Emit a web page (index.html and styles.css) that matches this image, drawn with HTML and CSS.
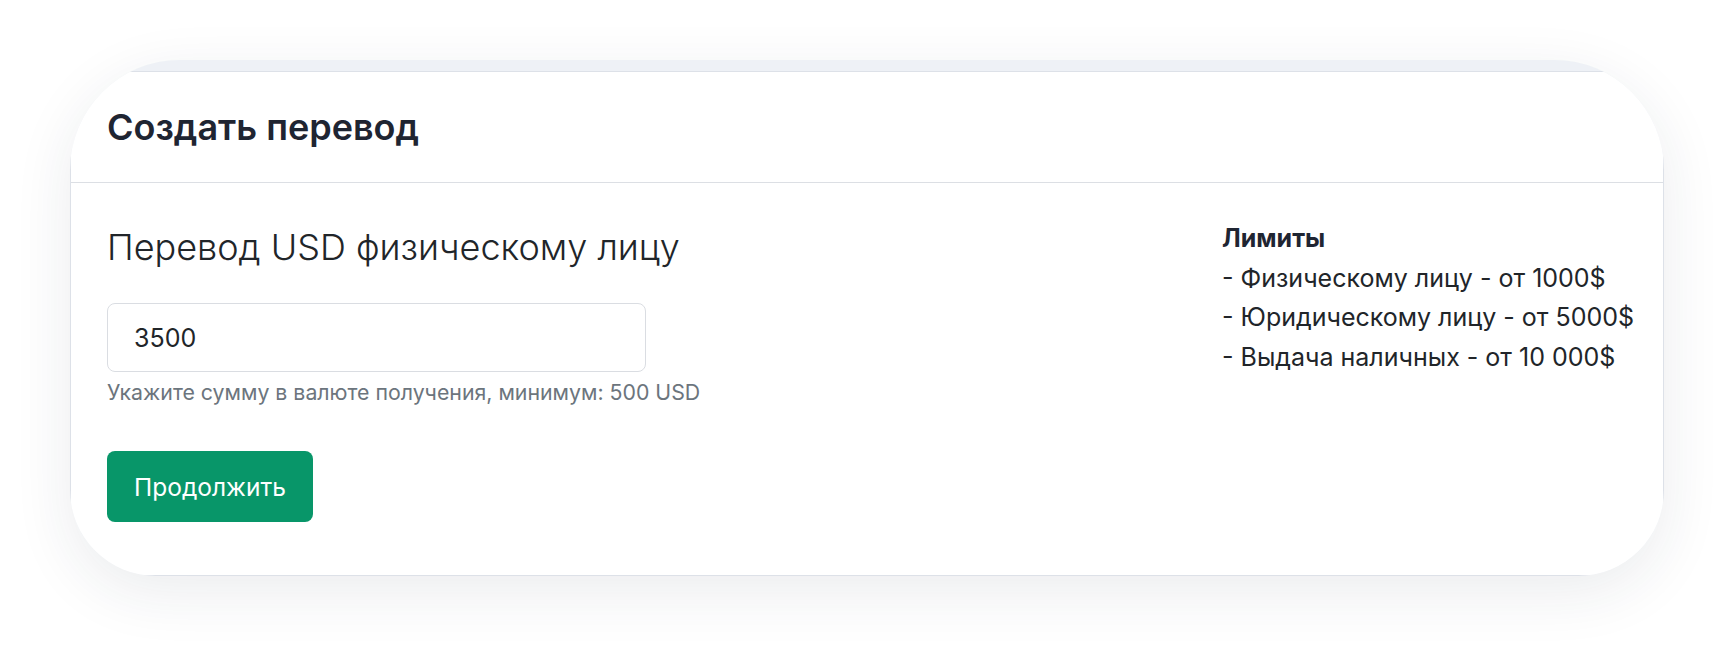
FILE: index.html
```html
<!DOCTYPE html>
<html lang="ru">
<head>
  <meta charset="UTF-8" />
  <meta name="viewport" content="width=device-width, initial-scale=1.0" />
  <title>Создать перевод</title>
  <link rel="stylesheet" href="styles.css">
</head>
<body>
  <div class="page">
    <div class="frame">
      <div class="card">
        <div class="card-header">
          <h4>Создать перевод</h4>
        </div>
        <div class="card-body">
          <div class="form-col">
            <h3 class="subtitle">Перевод USD физическому лицу</h3>
            <input class="amount" type="text" value="3500" />
            <div class="hint">Укажите сумму в валюте получения, минимум: 500 USD</div>
            <button class="btn-next">Продолжить</button>
          </div>
          <div class="limits">
            <b>Лимиты</b><br>
            - Физическому лицу - от 1000$<br>
            - Юридическому лицу - от 5000$<br>
            - Выдача наличных - от 10 000$
          </div>
        </div>
      </div>
    </div>
  </div>
</body>
</html>
```

FILE: styles.css
```css
body {
  margin: 0;
  background: #fff;
  font-family: Inter, "Noto Sans", sans-serif;
  color: #212529;
}
.page {
  padding: 60px 64px 76px 70px;
}
.frame {
  background: #eef1f6;
  padding-top: 11px;
  border-radius: 110px 110px 86px 86px;
  overflow: hidden;
  box-shadow: 0 16px 60px rgba(30, 40, 70, 0.09);
}
.card {
  background: #fff;
  border: 1px solid #dde1e8;
}
.card-header {
  height: 110px;
  padding: 0 36px;
  display: flex;
  align-items: center;
  border-bottom: 1px solid #dcdfe4;
}
.card-header h4 {
  margin: 0;
  font-size: 36px;
  font-weight: 600;
  color: #1f2532;
}
.card-body {
  display: grid;
  grid-template-columns: 1fr 405px;
  padding: 0 36px 53px;
}
.subtitle {
  margin: 43px 0 34px;
  font-size: 36px;
  font-weight: 300;
  line-height: 1.2;
  color: #212529;
}
.amount {
  display: block;
  box-sizing: border-box;
  width: 539px;
  height: 69px;
  padding: 0 26px;
  font-family: inherit;
  font-size: 25px;
  color: #212529;
  border: 1px solid #dadde2;
  border-radius: 8px;
  outline: none;
}
.hint {
  margin-top: 5px;
  font-size: 21.3px;
  line-height: 30px;
  color: #6c757d;
}
.btn-next {
  margin-top: 44px;
  height: 71px;
  padding: 0 27px;
  font-family: inherit;
  font-size: 24.5px;
  color: #fff;
  background: #089669;
  border: none;
  border-radius: 8px;
  cursor: pointer;
}
.limits {
  padding-top: 36px;
  font-size: 25px;
  line-height: 39.5px;
  white-space: nowrap;
  color: #212529;
}
.limits b {
  font-weight: 700;
  color: #1f2532;
}
```
